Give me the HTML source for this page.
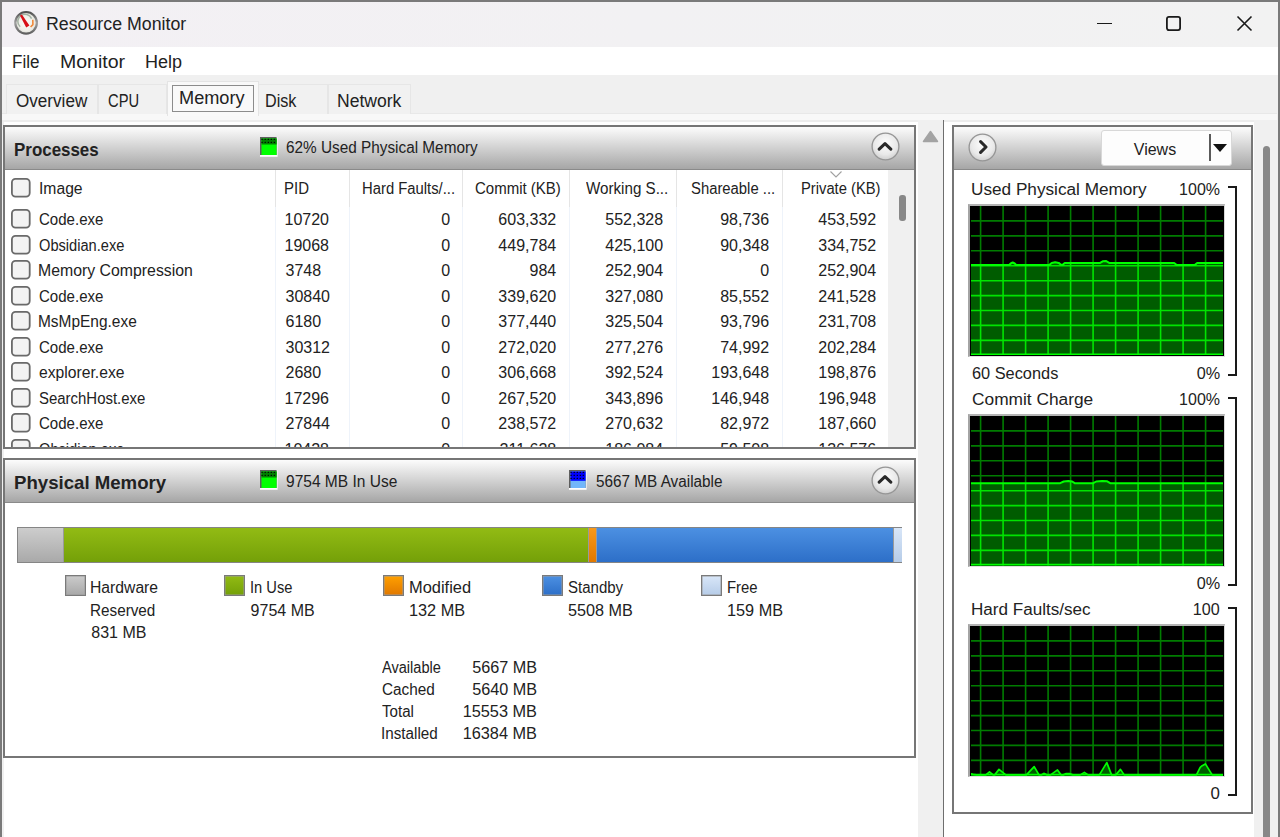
<!DOCTYPE html>
<html><head><meta charset="utf-8"><title>Resource Monitor</title>
<style>
html,body{margin:0;padding:0;width:1280px;height:837px;overflow:hidden;background:#fff;}
body{position:relative;font-family:"Liberation Sans", sans-serif;}
div,span,svg{position:absolute;box-sizing:border-box;}
.t{white-space:nowrap;}
</style></head><body>
<div style="left:0px;top:0px;width:1280px;height:47px;background:linear-gradient(90deg,#f3f0f4,#f2f1f3 50%,#f2f2f2)"></div>
<div style="left:0px;top:47px;width:1280px;height:28px;background:#fff"></div>
<div style="left:0px;top:75px;width:1280px;height:45px;background:#f0f0f0"></div>
<div style="left:0px;top:120px;width:1280px;height:717px;background:#fff"></div>
<div style="left:2px;top:120px;width:1.5px;height:717px;background:#f0f0f0"></div>
<svg style="left:13px;top:10px" width="26" height="26" viewBox="0 0 26 26">
<defs><radialGradient id="ig" cx="50%" cy="50%" r="50%"><stop offset="0" stop-color="#fbfbf8"/><stop offset="0.7" stop-color="#f0f0ea"/><stop offset="1" stop-color="#dcdcd6"/></radialGradient>
<linearGradient id="rim" x1="0" y1="0" x2="0" y2="1"><stop offset="0" stop-color="#505050"/><stop offset="0.5" stop-color="#a0a0a0"/><stop offset="1" stop-color="#606060"/></linearGradient></defs>
<circle cx="13.1" cy="12.8" r="10.8" fill="url(#ig)" stroke="url(#rim)" stroke-width="2.2"/>
<path d="M7.2 16.8 A7.2 7.2 0 1 1 18.6 8.6" fill="none" stroke="#a4b2a4" stroke-width="1.5"/>
<path d="M7.0 5.4 L8.9 4.5 L16.4 15.4 L13.2 17.6 Z" fill="#d81018"/>
<path d="M19.8 9.8 L19.9 14.6 L17.6 17" fill="none" stroke="#f0883a" stroke-width="1.6" stroke-linejoin="round"/>
</svg>
<span class="t" style="left:46.31px;top:13.36px;font-size:18px;line-height:22px;font-weight:400;color:#222;transform:scaleX(0.9868);transform-origin:left center;">Resource Monitor</span>
<div style="left:1097px;top:22.8px;width:15px;height:1.5px;background:#1a1a1a"></div>
<svg style="left:1165px;top:15px" width="17" height="17" viewBox="0 0 17 17"><rect x="1.9" y="1.9" width="13.2" height="13.2" rx="2" fill="none" stroke="#1a1a1a" stroke-width="1.8"/></svg>
<svg style="left:1236px;top:15px" width="17" height="17" viewBox="0 0 17 17"><path d="M1.5 1.5L15.5 15.5M15.5 1.5L1.5 15.5" stroke="#1a1a1a" stroke-width="1.6"/></svg>
<span class="t" style="left:12.35px;top:51.36px;font-size:18px;line-height:22px;font-weight:400;color:#222;transform:scaleX(0.9467);transform-origin:left center;">File</span>
<span class="t" style="left:59.92px;top:51.36px;font-size:18px;line-height:22px;font-weight:400;color:#222;transform:scaleX(1.0843);transform-origin:left center;">Monitor</span>
<span class="t" style="left:145.00px;top:51.36px;font-size:18px;line-height:22px;font-weight:400;color:#222;">Help</span>
<div style="left:2px;top:113.3px;width:1275px;height:0.8px;background:#e8e8e8"></div>
<div style="left:2px;top:114px;width:1275px;height:5.5px;background:#f8f8f8"></div>
<div style="left:2px;top:119.5px;width:1275px;height:2px;background:#ededed"></div>
<div style="left:6px;top:84px;width:92px;height:30px;background:#f1f1f1;border:1px solid #e6e6e6;border-bottom:none"></div>
<div style="left:98px;top:84px;width:69px;height:30px;background:#f1f1f1;border:1px solid #e6e6e6;border-bottom:none"></div>
<div style="left:258px;top:84px;width:70px;height:30px;background:#f1f1f1;border:1px solid #e6e6e6;border-bottom:none"></div>
<div style="left:328px;top:84px;width:83px;height:30px;background:#f1f1f1;border:1px solid #e6e6e6;border-bottom:none"></div>
<div style="left:167px;top:81px;width:92px;height:35px;background:#f9f9f9;border:1px solid #e4e4e4;border-bottom:none"></div>
<div style="left:172px;top:84.5px;width:82px;height:27px;border:1.4px solid #8c8c8c"></div>
<span class="t" style="left:15.60px;top:90.36px;font-size:18px;line-height:22px;font-weight:400;color:#222;transform:scaleX(0.9498);transform-origin:left center;">Overview</span>
<span class="t" style="left:107.50px;top:90.36px;font-size:18px;line-height:22px;font-weight:400;color:#222;transform:scaleX(0.8188);transform-origin:left center;">CPU</span>
<span class="t" style="left:178.69px;top:87.36px;font-size:18px;line-height:22px;font-weight:400;color:#222;transform:scaleX(1.0093);transform-origin:left center;">Memory</span>
<span class="t" style="left:264.70px;top:90.36px;font-size:18px;line-height:22px;font-weight:400;color:#222;transform:scaleX(0.8972);transform-origin:left center;">Disk</span>
<span class="t" style="left:336.72px;top:90.36px;font-size:18px;line-height:22px;font-weight:400;color:#222;transform:scaleX(0.9755);transform-origin:left center;">Network</span>
<div style="left:918px;top:120px;width:25px;height:717px;background:#f0f0f0"></div>
<div style="left:943px;top:120px;width:1.3px;height:717px;background:#6e6e6e"></div>
<svg style="left:922px;top:130px" width="17" height="13" viewBox="0 0 17 13"><path d="M8.5 1.5L15.5 11.5L1.5 11.5Z" fill="#a3a3a3" stroke="#a3a3a3" stroke-width="1.5" stroke-linejoin="round"/></svg>
<div style="left:1254px;top:120px;width:24px;height:717px;background:#f0f0f0"></div>
<div style="left:1263px;top:146px;width:7px;height:691px;background:#888;border-radius:3.5px 3.5px 0 0"></div>
<div style="left:3px;top:125px;width:913px;height:324px;border:2px solid #767676;background:#fff"></div>
<div style="left:5px;top:127px;width:909px;height:43px;background:linear-gradient(#fcfcfc,#a6a6a6);border-bottom:1px solid #8a8a8a"></div>
<span class="t" style="left:13.91px;top:137.82px;font-size:19px;line-height:24px;font-weight:700;color:#222;transform:scaleX(0.8908);transform-origin:left center;">Processes</span>
<svg style="left:260.2px;top:137px" width="18" height="20" viewBox="0 0 18 20"><rect x="0" y="0" width="17.6" height="19.8" fill="#fdfdfd"/><rect x="0" y="0" width="16.6" height="18" fill="#5e5e5e"/><rect x="1.5" y="1.5" width="15.1" height="16.5" fill="#00ff00"/><rect x="1.5" y="1.5" width="15.1" height="6" fill="#008000"/><rect x="1.45" y="1.65" width="1.3" height="1.3" rx="0.4" fill="#000"/><rect x="4.55" y="1.65" width="1.3" height="1.3" rx="0.4" fill="#000"/><rect x="7.65" y="1.65" width="1.3" height="1.3" rx="0.4" fill="#000"/><rect x="10.65" y="1.65" width="1.3" height="1.3" rx="0.4" fill="#000"/><rect x="13.65" y="1.65" width="1.3" height="1.3" rx="0.4" fill="#000"/><rect x="1.45" y="4.70" width="1.3" height="1.3" rx="0.4" fill="#000"/><rect x="4.55" y="4.70" width="1.3" height="1.3" rx="0.4" fill="#000"/><rect x="7.65" y="4.70" width="1.3" height="1.3" rx="0.4" fill="#000"/><rect x="10.65" y="4.70" width="1.3" height="1.3" rx="0.4" fill="#000"/><rect x="13.65" y="4.70" width="1.3" height="1.3" rx="0.4" fill="#000"/></svg>
<span class="t" style="left:285.75px;top:138.06px;font-size:16px;line-height:20px;font-weight:400;color:#222;transform:scaleX(0.9582);transform-origin:left center;">62% Used Physical Memory</span>
<svg style="left:870.5px;top:132.0px" width="29" height="29" viewBox="0 0 29 29"><defs><radialGradient id="cb885146" cx="50%" cy="38%" r="60%"><stop offset="0" stop-color="#fdfdfd"/><stop offset="0.7" stop-color="#e9e9e9"/><stop offset="1" stop-color="#d2d2d2"/></radialGradient></defs><circle cx="14.5" cy="14.5" r="13.4" fill="url(#cb885146)" stroke="#959595" stroke-width="1.3"/></svg>
<svg style="left:877px;top:140.5px" width="16" height="10" viewBox="0 0 16 10"><path d="M2.2 8.2L8 2.6L13.8 8.2" fill="none" stroke="#2a2a2a" stroke-width="3" stroke-linecap="round" stroke-linejoin="round"/></svg>
<div style="left:274.5px;top:170px;width:1px;height:37px;background:#e5e5e5"></div>
<div style="left:274.5px;top:207px;width:1px;height:240px;background:#eef3fa"></div>
<div style="left:349px;top:170px;width:1px;height:37px;background:#e5e5e5"></div>
<div style="left:349px;top:207px;width:1px;height:240px;background:#eef3fa"></div>
<div style="left:462px;top:170px;width:1px;height:37px;background:#e5e5e5"></div>
<div style="left:462px;top:207px;width:1px;height:240px;background:#eef3fa"></div>
<div style="left:568.5px;top:170px;width:1px;height:37px;background:#e5e5e5"></div>
<div style="left:568.5px;top:207px;width:1px;height:240px;background:#eef3fa"></div>
<div style="left:675.5px;top:170px;width:1px;height:37px;background:#e5e5e5"></div>
<div style="left:675.5px;top:207px;width:1px;height:240px;background:#eef3fa"></div>
<div style="left:781.5px;top:170px;width:1px;height:37px;background:#e5e5e5"></div>
<div style="left:781.5px;top:207px;width:1px;height:240px;background:#eef3fa"></div>
<div style="left:888px;top:170px;width:26px;height:277px;background:#f0f0f0"></div>
<div style="left:899px;top:195px;width:6.5px;height:26px;background:#888;border-radius:3px"></div>
<svg style="left:828.5px;top:169.5px" width="14" height="9" viewBox="0 0 14 9"><path d="M1.5 1.5L7 7L12.5 1.5" fill="none" stroke="#a0a0a0" stroke-width="1.1"/></svg>
<svg style="left:11.3px;top:177.7px" width="20" height="20" viewBox="0 0 20 20"><rect x="0.9" y="0.9" width="17.8" height="17.8" rx="3.6" fill="#f3f3f3" stroke="#6a6a6a" stroke-width="1.8"/></svg>
<span class="t" style="left:39.02px;top:179.06px;font-size:16px;line-height:20px;font-weight:400;color:#222;transform:scaleX(0.9800);transform-origin:left center;">Image</span>
<span class="t" style="left:283.56px;top:179.06px;font-size:16px;line-height:20px;font-weight:400;color:#222;transform:scaleX(0.9356);transform-origin:left center;">PID</span>
<span class="t" style="left:361.87px;top:179.06px;font-size:16px;line-height:20px;font-weight:400;color:#222;transform:scaleX(0.9262);transform-origin:left center;">Hard Faults/...</span>
<span class="t" style="left:475.00px;top:179.06px;font-size:16px;line-height:20px;font-weight:400;color:#222;transform:scaleX(0.9372);transform-origin:left center;">Commit (KB)</span>
<span class="t" style="left:586.00px;top:179.06px;font-size:16px;line-height:20px;font-weight:400;color:#222;transform:scaleX(0.9473);transform-origin:left center;">Working S...</span>
<span class="t" style="left:690.60px;top:179.06px;font-size:16px;line-height:20px;font-weight:400;color:#222;transform:scaleX(0.9274);transform-origin:left center;">Shareable ...</span>
<span class="t" style="left:801.08px;top:179.06px;font-size:16px;line-height:20px;font-weight:400;color:#222;transform:scaleX(0.9221);transform-origin:left center;">Private (KB)</span>
<div style="left:5px;top:207px;width:883px;height:240px;overflow:hidden">
<svg style="left:6.300000000000001px;top:2.3000000000000114px" width="20" height="20" viewBox="0 0 20 20"><rect x="0.9" y="0.9" width="17.8" height="17.8" rx="3.6" fill="#f3f3f3" stroke="#6a6a6a" stroke-width="1.8"/></svg>
<span class="t" style="left:33.60px;top:3.36px;font-size:16px;line-height:20px;font-weight:400;color:#222;transform:scaleX(0.9403);transform-origin:left center;">Code.exe</span>
<span class="t" style="left:279.50px;top:3.36px;font-size:16px;line-height:20px;font-weight:400;color:#222;">10720</span>
<span class="t" style="left:436.20px;top:3.36px;font-size:16px;line-height:20px;font-weight:400;color:#222;">0</span>
<span class="t" style="left:493.36px;top:3.36px;font-size:16px;line-height:20px;font-weight:400;color:#222;">603,332</span>
<span class="t" style="left:600.26px;top:3.36px;font-size:16px;line-height:20px;font-weight:400;color:#222;">552,328</span>
<span class="t" style="left:715.16px;top:3.36px;font-size:16px;line-height:20px;font-weight:400;color:#222;">98,736</span>
<span class="t" style="left:813.26px;top:3.36px;font-size:16px;line-height:20px;font-weight:400;color:#222;">453,592</span>
<svg style="left:6.300000000000001px;top:27.80000000000001px" width="20" height="20" viewBox="0 0 20 20"><rect x="0.9" y="0.9" width="17.8" height="17.8" rx="3.6" fill="#f3f3f3" stroke="#6a6a6a" stroke-width="1.8"/></svg>
<span class="t" style="left:33.60px;top:28.86px;font-size:16px;line-height:20px;font-weight:400;color:#222;transform:scaleX(0.9145);transform-origin:left center;">Obsidian.exe</span>
<span class="t" style="left:279.50px;top:28.86px;font-size:16px;line-height:20px;font-weight:400;color:#222;">19068</span>
<span class="t" style="left:436.20px;top:28.86px;font-size:16px;line-height:20px;font-weight:400;color:#222;">0</span>
<span class="t" style="left:493.36px;top:28.86px;font-size:16px;line-height:20px;font-weight:400;color:#222;">449,784</span>
<span class="t" style="left:600.26px;top:28.86px;font-size:16px;line-height:20px;font-weight:400;color:#222;">425,100</span>
<span class="t" style="left:715.16px;top:28.86px;font-size:16px;line-height:20px;font-weight:400;color:#222;">90,348</span>
<span class="t" style="left:813.26px;top:28.86px;font-size:16px;line-height:20px;font-weight:400;color:#222;">334,752</span>
<svg style="left:6.300000000000001px;top:53.30000000000001px" width="20" height="20" viewBox="0 0 20 20"><rect x="0.9" y="0.9" width="17.8" height="17.8" rx="3.6" fill="#f3f3f3" stroke="#6a6a6a" stroke-width="1.8"/></svg>
<span class="t" style="left:32.61px;top:54.36px;font-size:16px;line-height:20px;font-weight:400;color:#222;transform:scaleX(0.9897);transform-origin:left center;">Memory Compression</span>
<span class="t" style="left:280.50px;top:54.36px;font-size:16px;line-height:20px;font-weight:400;color:#222;">3748</span>
<span class="t" style="left:436.20px;top:54.36px;font-size:16px;line-height:20px;font-weight:400;color:#222;">0</span>
<span class="t" style="left:524.50px;top:54.36px;font-size:16px;line-height:20px;font-weight:400;color:#222;">984</span>
<span class="t" style="left:600.26px;top:54.36px;font-size:16px;line-height:20px;font-weight:400;color:#222;">252,904</span>
<span class="t" style="left:755.20px;top:54.36px;font-size:16px;line-height:20px;font-weight:400;color:#222;">0</span>
<span class="t" style="left:813.26px;top:54.36px;font-size:16px;line-height:20px;font-weight:400;color:#222;">252,904</span>
<svg style="left:6.300000000000001px;top:78.80000000000001px" width="20" height="20" viewBox="0 0 20 20"><rect x="0.9" y="0.9" width="17.8" height="17.8" rx="3.6" fill="#f3f3f3" stroke="#6a6a6a" stroke-width="1.8"/></svg>
<span class="t" style="left:33.60px;top:79.86px;font-size:16px;line-height:20px;font-weight:400;color:#222;transform:scaleX(0.9403);transform-origin:left center;">Code.exe</span>
<span class="t" style="left:280.50px;top:79.86px;font-size:16px;line-height:20px;font-weight:400;color:#222;">30840</span>
<span class="t" style="left:436.20px;top:79.86px;font-size:16px;line-height:20px;font-weight:400;color:#222;">0</span>
<span class="t" style="left:493.36px;top:79.86px;font-size:16px;line-height:20px;font-weight:400;color:#222;">339,620</span>
<span class="t" style="left:600.26px;top:79.86px;font-size:16px;line-height:20px;font-weight:400;color:#222;">327,080</span>
<span class="t" style="left:715.16px;top:79.86px;font-size:16px;line-height:20px;font-weight:400;color:#222;">85,552</span>
<span class="t" style="left:813.26px;top:79.86px;font-size:16px;line-height:20px;font-weight:400;color:#222;">241,528</span>
<svg style="left:6.300000000000001px;top:104.30000000000001px" width="20" height="20" viewBox="0 0 20 20"><rect x="0.9" y="0.9" width="17.8" height="17.8" rx="3.6" fill="#f3f3f3" stroke="#6a6a6a" stroke-width="1.8"/></svg>
<span class="t" style="left:32.63px;top:105.36px;font-size:16px;line-height:20px;font-weight:400;color:#222;transform:scaleX(0.9658);transform-origin:left center;">MsMpEng.exe</span>
<span class="t" style="left:280.50px;top:105.36px;font-size:16px;line-height:20px;font-weight:400;color:#222;">6180</span>
<span class="t" style="left:436.20px;top:105.36px;font-size:16px;line-height:20px;font-weight:400;color:#222;">0</span>
<span class="t" style="left:493.36px;top:105.36px;font-size:16px;line-height:20px;font-weight:400;color:#222;">377,440</span>
<span class="t" style="left:600.26px;top:105.36px;font-size:16px;line-height:20px;font-weight:400;color:#222;">325,504</span>
<span class="t" style="left:715.16px;top:105.36px;font-size:16px;line-height:20px;font-weight:400;color:#222;">93,796</span>
<span class="t" style="left:813.26px;top:105.36px;font-size:16px;line-height:20px;font-weight:400;color:#222;">231,708</span>
<svg style="left:6.300000000000001px;top:129.8px" width="20" height="20" viewBox="0 0 20 20"><rect x="0.9" y="0.9" width="17.8" height="17.8" rx="3.6" fill="#f3f3f3" stroke="#6a6a6a" stroke-width="1.8"/></svg>
<span class="t" style="left:33.60px;top:130.86px;font-size:16px;line-height:20px;font-weight:400;color:#222;transform:scaleX(0.9403);transform-origin:left center;">Code.exe</span>
<span class="t" style="left:280.50px;top:130.86px;font-size:16px;line-height:20px;font-weight:400;color:#222;">30312</span>
<span class="t" style="left:436.20px;top:130.86px;font-size:16px;line-height:20px;font-weight:400;color:#222;">0</span>
<span class="t" style="left:493.36px;top:130.86px;font-size:16px;line-height:20px;font-weight:400;color:#222;">272,020</span>
<span class="t" style="left:600.26px;top:130.86px;font-size:16px;line-height:20px;font-weight:400;color:#222;">277,276</span>
<span class="t" style="left:715.16px;top:130.86px;font-size:16px;line-height:20px;font-weight:400;color:#222;">74,992</span>
<span class="t" style="left:813.26px;top:130.86px;font-size:16px;line-height:20px;font-weight:400;color:#222;">202,284</span>
<svg style="left:6.300000000000001px;top:155.3px" width="20" height="20" viewBox="0 0 20 20"><rect x="0.9" y="0.9" width="17.8" height="17.8" rx="3.6" fill="#f3f3f3" stroke="#6a6a6a" stroke-width="1.8"/></svg>
<span class="t" style="left:33.60px;top:156.36px;font-size:16px;line-height:20px;font-weight:400;color:#222;transform:scaleX(0.9809);transform-origin:left center;">explorer.exe</span>
<span class="t" style="left:280.50px;top:156.36px;font-size:16px;line-height:20px;font-weight:400;color:#222;">2680</span>
<span class="t" style="left:436.20px;top:156.36px;font-size:16px;line-height:20px;font-weight:400;color:#222;">0</span>
<span class="t" style="left:493.36px;top:156.36px;font-size:16px;line-height:20px;font-weight:400;color:#222;">306,668</span>
<span class="t" style="left:600.26px;top:156.36px;font-size:16px;line-height:20px;font-weight:400;color:#222;">392,524</span>
<span class="t" style="left:706.26px;top:156.36px;font-size:16px;line-height:20px;font-weight:400;color:#222;">193,648</span>
<span class="t" style="left:813.26px;top:156.36px;font-size:16px;line-height:20px;font-weight:400;color:#222;">198,876</span>
<svg style="left:6.300000000000001px;top:180.8px" width="20" height="20" viewBox="0 0 20 20"><rect x="0.9" y="0.9" width="17.8" height="17.8" rx="3.6" fill="#f3f3f3" stroke="#6a6a6a" stroke-width="1.8"/></svg>
<span class="t" style="left:33.60px;top:181.86px;font-size:16px;line-height:20px;font-weight:400;color:#222;transform:scaleX(0.9338);transform-origin:left center;">SearchHost.exe</span>
<span class="t" style="left:279.50px;top:181.86px;font-size:16px;line-height:20px;font-weight:400;color:#222;">17296</span>
<span class="t" style="left:436.20px;top:181.86px;font-size:16px;line-height:20px;font-weight:400;color:#222;">0</span>
<span class="t" style="left:493.36px;top:181.86px;font-size:16px;line-height:20px;font-weight:400;color:#222;">267,520</span>
<span class="t" style="left:600.26px;top:181.86px;font-size:16px;line-height:20px;font-weight:400;color:#222;">343,896</span>
<span class="t" style="left:706.26px;top:181.86px;font-size:16px;line-height:20px;font-weight:400;color:#222;">146,948</span>
<span class="t" style="left:813.26px;top:181.86px;font-size:16px;line-height:20px;font-weight:400;color:#222;">196,948</span>
<svg style="left:6.300000000000001px;top:206.3px" width="20" height="20" viewBox="0 0 20 20"><rect x="0.9" y="0.9" width="17.8" height="17.8" rx="3.6" fill="#f3f3f3" stroke="#6a6a6a" stroke-width="1.8"/></svg>
<span class="t" style="left:33.60px;top:207.36px;font-size:16px;line-height:20px;font-weight:400;color:#222;transform:scaleX(0.9403);transform-origin:left center;">Code.exe</span>
<span class="t" style="left:280.50px;top:207.36px;font-size:16px;line-height:20px;font-weight:400;color:#222;">27844</span>
<span class="t" style="left:436.20px;top:207.36px;font-size:16px;line-height:20px;font-weight:400;color:#222;">0</span>
<span class="t" style="left:493.36px;top:207.36px;font-size:16px;line-height:20px;font-weight:400;color:#222;">238,572</span>
<span class="t" style="left:600.26px;top:207.36px;font-size:16px;line-height:20px;font-weight:400;color:#222;">270,632</span>
<span class="t" style="left:715.16px;top:207.36px;font-size:16px;line-height:20px;font-weight:400;color:#222;">82,972</span>
<span class="t" style="left:813.26px;top:207.36px;font-size:16px;line-height:20px;font-weight:400;color:#222;">187,660</span>
<svg style="left:6.300000000000001px;top:231.8px" width="20" height="20" viewBox="0 0 20 20"><rect x="0.9" y="0.9" width="17.8" height="17.8" rx="3.6" fill="#f3f3f3" stroke="#6a6a6a" stroke-width="1.8"/></svg>
<span class="t" style="left:33.60px;top:232.86px;font-size:16px;line-height:20px;font-weight:400;color:#222;transform:scaleX(0.9145);transform-origin:left center;">Obsidian.exe</span>
<span class="t" style="left:279.50px;top:232.86px;font-size:16px;line-height:20px;font-weight:400;color:#222;">10428</span>
<span class="t" style="left:436.20px;top:232.86px;font-size:16px;line-height:20px;font-weight:400;color:#222;">0</span>
<span class="t" style="left:494.55px;top:232.86px;font-size:16px;line-height:20px;font-weight:400;color:#222;">211,628</span>
<span class="t" style="left:600.26px;top:232.86px;font-size:16px;line-height:20px;font-weight:400;color:#222;">186,084</span>
<span class="t" style="left:715.16px;top:232.86px;font-size:16px;line-height:20px;font-weight:400;color:#222;">59,508</span>
<span class="t" style="left:813.26px;top:232.86px;font-size:16px;line-height:20px;font-weight:400;color:#222;">136,576</span>
</div>
<div style="left:3px;top:458px;width:913px;height:300px;border:2px solid #767676;background:#fff"></div>
<div style="left:5px;top:460px;width:909px;height:43px;background:linear-gradient(#fcfcfc,#a6a6a6);border-bottom:1px solid #8a8a8a"></div>
<span class="t" style="left:13.82px;top:471.02px;font-size:19px;line-height:24px;font-weight:700;color:#222;transform:scaleX(0.9801);transform-origin:left center;">Physical Memory</span>
<svg style="left:260.2px;top:470px" width="18" height="20" viewBox="0 0 18 20"><rect x="0" y="0" width="17.6" height="19.8" fill="#fdfdfd"/><rect x="0" y="0" width="16.6" height="18" fill="#5e5e5e"/><rect x="1.5" y="1.5" width="15.1" height="16.5" fill="#00ff00"/><rect x="1.5" y="1.5" width="15.1" height="6" fill="#008000"/><rect x="1.45" y="1.65" width="1.3" height="1.3" rx="0.4" fill="#000"/><rect x="4.55" y="1.65" width="1.3" height="1.3" rx="0.4" fill="#000"/><rect x="7.65" y="1.65" width="1.3" height="1.3" rx="0.4" fill="#000"/><rect x="10.65" y="1.65" width="1.3" height="1.3" rx="0.4" fill="#000"/><rect x="13.65" y="1.65" width="1.3" height="1.3" rx="0.4" fill="#000"/><rect x="1.45" y="4.70" width="1.3" height="1.3" rx="0.4" fill="#000"/><rect x="4.55" y="4.70" width="1.3" height="1.3" rx="0.4" fill="#000"/><rect x="7.65" y="4.70" width="1.3" height="1.3" rx="0.4" fill="#000"/><rect x="10.65" y="4.70" width="1.3" height="1.3" rx="0.4" fill="#000"/><rect x="13.65" y="4.70" width="1.3" height="1.3" rx="0.4" fill="#000"/></svg>
<span class="t" style="left:285.70px;top:472.06px;font-size:16px;line-height:20px;font-weight:400;color:#222;transform:scaleX(0.9701);transform-origin:left center;">9754 MB In Use</span>
<svg style="left:569.2px;top:470px" width="18" height="20" viewBox="0 0 18 20"><rect x="0" y="0" width="17.6" height="19.8" fill="#fdfdfd"/><rect x="0" y="0" width="16.6" height="18" fill="#5e5e5e"/><rect x="1.5" y="1.5" width="15.1" height="16.5" fill="#72b6fa"/><rect x="1.5" y="1.5" width="15.1" height="9.3" fill="#0000ff"/><rect x="1.45" y="1.65" width="1.3" height="1.3" rx="0.4" fill="#000"/><rect x="4.55" y="1.65" width="1.3" height="1.3" rx="0.4" fill="#000"/><rect x="7.65" y="1.65" width="1.3" height="1.3" rx="0.4" fill="#000"/><rect x="10.65" y="1.65" width="1.3" height="1.3" rx="0.4" fill="#000"/><rect x="13.65" y="1.65" width="1.3" height="1.3" rx="0.4" fill="#000"/><rect x="1.45" y="4.70" width="1.3" height="1.3" rx="0.4" fill="#000"/><rect x="4.55" y="4.70" width="1.3" height="1.3" rx="0.4" fill="#000"/><rect x="7.65" y="4.70" width="1.3" height="1.3" rx="0.4" fill="#000"/><rect x="10.65" y="4.70" width="1.3" height="1.3" rx="0.4" fill="#000"/><rect x="13.65" y="4.70" width="1.3" height="1.3" rx="0.4" fill="#000"/><rect x="1.45" y="7.75" width="1.3" height="1.3" rx="0.4" fill="#000"/><rect x="4.55" y="7.75" width="1.3" height="1.3" rx="0.4" fill="#000"/><rect x="7.65" y="7.75" width="1.3" height="1.3" rx="0.4" fill="#000"/><rect x="10.65" y="7.75" width="1.3" height="1.3" rx="0.4" fill="#000"/><rect x="13.65" y="7.75" width="1.3" height="1.3" rx="0.4" fill="#000"/></svg>
<span class="t" style="left:595.60px;top:472.06px;font-size:16px;line-height:20px;font-weight:400;color:#222;transform:scaleX(0.9563);transform-origin:left center;">5667 MB Available</span>
<svg style="left:870.5px;top:465.5px" width="29" height="29" viewBox="0 0 29 29"><defs><radialGradient id="cb885480" cx="50%" cy="38%" r="60%"><stop offset="0" stop-color="#fdfdfd"/><stop offset="0.7" stop-color="#e9e9e9"/><stop offset="1" stop-color="#d2d2d2"/></radialGradient></defs><circle cx="14.5" cy="14.5" r="13.4" fill="url(#cb885480)" stroke="#959595" stroke-width="1.3"/></svg>
<svg style="left:877px;top:474px" width="16" height="10" viewBox="0 0 16 10"><path d="M2.2 8.2L8 2.6L13.8 8.2" fill="none" stroke="#2a2a2a" stroke-width="3" stroke-linecap="round" stroke-linejoin="round"/></svg>
<div style="left:17px;top:527px;width:885px;height:36px;border:1px solid #858585;box-shadow:inset 0 0 0 1px rgba(140,140,140,0.45);background:#c8c8c8"></div>
<div style="left:18px;top:528px;width:45px;height:34px;background:linear-gradient(#cdcdcd,#a9a9a9)"></div>
<div style="left:63px;top:528px;width:525px;height:34px;background:linear-gradient(#92bb14,#74a008);border-left:1px solid #9a9a9a"></div>
<div style="left:588px;top:528px;width:7.5px;height:34px;background:linear-gradient(#f8991a,#e07800);border-left:1px solid #9a9a9a"></div>
<div style="left:595.5px;top:528px;width:297px;height:34px;background:linear-gradient(#4c90e2,#2d6fc8);border-left:1px solid #9a9a9a"></div>
<div style="left:892.5px;top:528px;width:9.5px;height:34px;background:linear-gradient(#d8e6f8,#b6cce8);border-left:1px solid #9a9a9a"></div>
<div style="left:65.3px;top:575.4px;width:20.6px;height:20.6px;border:1px solid #7a7a7a;box-shadow:inset 0 0 0 0.5px #9a9a9a;background:linear-gradient(#cbcbcb,#a8a8a8)"></div>
<div style="left:224.2px;top:575.4px;width:20.6px;height:20.6px;border:1px solid #7a7a7a;box-shadow:inset 0 0 0 0.5px #9a9a9a;background:linear-gradient(#92bb14,#74a008)"></div>
<div style="left:383.1px;top:575.4px;width:20.6px;height:20.6px;border:1px solid #7a7a7a;box-shadow:inset 0 0 0 0.5px #9a9a9a;background:linear-gradient(#ffa000,#e07800)"></div>
<div style="left:542.2px;top:575.4px;width:20.6px;height:20.6px;border:1px solid #7a7a7a;box-shadow:inset 0 0 0 0.5px #9a9a9a;background:linear-gradient(#4c90e2,#2d6fc8)"></div>
<div style="left:701.3px;top:575.4px;width:20.6px;height:20.6px;border:1px solid #7a7a7a;box-shadow:inset 0 0 0 0.5px #9a9a9a;background:linear-gradient(#d8e6f8,#b6cce8)"></div>
<span class="t" style="left:90.27px;top:578.46px;font-size:16px;line-height:20px;font-weight:400;color:#222;transform:scaleX(0.9816);transform-origin:left center;">Hardware</span>
<span class="t" style="left:90.30px;top:601.26px;font-size:16px;line-height:20px;font-weight:400;color:#222;transform:scaleX(0.9538);transform-origin:left center;">Reserved</span>
<span class="t" style="left:91.25px;top:623.46px;font-size:16px;line-height:20px;font-weight:400;color:#222;">831 MB</span>
<span class="t" style="left:249.68px;top:578.46px;font-size:16px;line-height:20px;font-weight:400;color:#222;transform:scaleX(0.9174);transform-origin:left center;">In Use</span>
<span class="t" style="left:250.60px;top:601.26px;font-size:16px;line-height:20px;font-weight:400;color:#222;">9754 MB</span>
<span class="t" style="left:408.57px;top:578.46px;font-size:16px;line-height:20px;font-weight:400;color:#222;transform:scaleX(1.0260);transform-origin:left center;">Modified</span>
<span class="t" style="left:408.58px;top:601.26px;font-size:16px;line-height:20px;font-weight:400;color:#222;transform:scaleX(1.0174);transform-origin:left center;">132 MB</span>
<span class="t" style="left:568.20px;top:578.46px;font-size:16px;line-height:20px;font-weight:400;color:#222;transform:scaleX(0.9385);transform-origin:left center;">Standby</span>
<span class="t" style="left:568.20px;top:601.26px;font-size:16px;line-height:20px;font-weight:400;color:#222;transform:scaleX(1.0131);transform-origin:left center;">5508 MB</span>
<span class="t" style="left:726.67px;top:578.46px;font-size:16px;line-height:20px;font-weight:400;color:#222;transform:scaleX(0.9281);transform-origin:left center;">Free</span>
<span class="t" style="left:726.58px;top:601.26px;font-size:16px;line-height:20px;font-weight:400;color:#222;transform:scaleX(1.0174);transform-origin:left center;">159 MB</span>
<span class="t" style="left:382.00px;top:657.86px;font-size:16px;line-height:20px;font-weight:400;color:#222;transform:scaleX(0.9113);transform-origin:left center;">Available</span>
<span class="t" style="left:472.94px;top:657.86px;font-size:16px;line-height:20px;font-weight:400;color:#222;transform:scaleX(1.0131);transform-origin:right center;">5667 MB</span>
<span class="t" style="left:382.00px;top:680.06px;font-size:16px;line-height:20px;font-weight:400;color:#222;transform:scaleX(0.9585);transform-origin:left center;">Cached</span>
<span class="t" style="left:472.94px;top:680.06px;font-size:16px;line-height:20px;font-weight:400;color:#222;transform:scaleX(1.0131);transform-origin:right center;">5640 MB</span>
<span class="t" style="left:382.00px;top:702.26px;font-size:16px;line-height:20px;font-weight:400;color:#222;transform:scaleX(0.9446);transform-origin:left center;">Total</span>
<span class="t" style="left:464.05px;top:702.26px;font-size:16px;line-height:20px;font-weight:400;color:#222;transform:scaleX(1.0187);transform-origin:right center;">15553 MB</span>
<span class="t" style="left:381.05px;top:724.46px;font-size:16px;line-height:20px;font-weight:400;color:#222;transform:scaleX(0.9516);transform-origin:left center;">Installed</span>
<span class="t" style="left:464.05px;top:724.46px;font-size:16px;line-height:20px;font-weight:400;color:#222;transform:scaleX(1.0187);transform-origin:right center;">16384 MB</span>
<div style="left:952px;top:125px;width:301px;height:689px;border:2px solid #767676;background:#fff"></div>
<div style="left:954px;top:127px;width:297px;height:43px;background:linear-gradient(#fcfcfc,#a6a6a6);border-bottom:1px solid #8a8a8a"></div>
<svg style="left:968.0px;top:132.5px" width="29" height="29" viewBox="0 0 29 29"><defs><radialGradient id="cb982147" cx="50%" cy="38%" r="60%"><stop offset="0" stop-color="#fdfdfd"/><stop offset="0.7" stop-color="#e9e9e9"/><stop offset="1" stop-color="#d2d2d2"/></radialGradient></defs><circle cx="14.5" cy="14.5" r="13.4" fill="url(#cb982147)" stroke="#959595" stroke-width="1.3"/></svg>
<svg style="left:977.5px;top:139px" width="10" height="16" viewBox="0 0 10 16"><path d="M2.6 2.6L8 8L2.6 13.4" fill="none" stroke="#2a2a2a" stroke-width="3" stroke-linecap="round" stroke-linejoin="round"/></svg>
<div style="left:1101px;top:129.7px;width:131px;height:36px;background:#fdfdfd;border:1px solid #d8d8d8;border-radius:3px"></div>
<span class="t" style="left:1133.75px;top:140.06px;font-size:16px;line-height:20px;font-weight:400;color:#222;">Views</span>
<div style="left:1209px;top:134px;width:1.6px;height:27px;background:#5a5a5a"></div>
<svg style="left:1212px;top:143px" width="16" height="10" viewBox="0 0 16 10"><path d="M1 1H15L8 9Z" fill="#111"/></svg>
<span class="t" style="left:970.53px;top:180.46px;font-size:16px;line-height:20px;font-weight:400;color:#222;transform:scaleX(1.0738);transform-origin:left center;">Used Physical Memory</span>
<span class="t" style="left:1179.11px;top:180.46px;font-size:16px;line-height:20px;font-weight:400;color:#222;">100%</span>
<span class="t" style="left:1196.90px;top:363.66px;font-size:16px;line-height:20px;font-weight:400;color:#222;transform:scaleX(1.0132);transform-origin:right center;">0%</span>
<span class="t" style="left:971.60px;top:363.66px;font-size:16px;line-height:20px;font-weight:400;color:#222;transform:scaleX(1.0212);transform-origin:left center;">60 Seconds</span>
<div style="left:1228px;top:186.2px;width:9px;height:1.8px;background:#1a1a1a"></div>
<div style="left:1235.2px;top:186.2px;width:1.8px;height:189.40000000000003px;background:#1a1a1a"></div>
<div style="left:1228px;top:373.8px;width:9px;height:1.8px;background:#1a1a1a"></div>
<div style="left:968px;top:203.5px;width:257px;height:153.3px;background:#000;border-top:2.8px solid #b4b4b4;border-left:2.8px solid #a4a4a4;border-right:1.5px solid #d8d8d8;border-bottom:1.5px solid #e0e0e0"></div>
<svg style="left:970.8px;top:206.3px" width="252.7" height="149.0" viewBox="0 0 252.7 149.0"><path d="M9.6 0V149.0M32.1 0V149.0M54.6 0V149.0M77.1 0V149.0M99.6 0V149.0M122.1 0V149.0M144.6 0V149.0M167.1 0V149.0M189.6 0V149.0M212.1 0V149.0M234.6 0V149.0M0 14.9H252.7M0 29.9H252.7M0 44.8H252.7M0 59.7H252.7M0 74.7H252.7M0 89.6H252.7M0 104.5H252.7M0 119.4H252.7M0 134.4H252.7" stroke="#007c00" stroke-width="1.6" fill="none"/><defs><clipPath id="c203"><path d="M-0.80 59.00 L38.20 59.00 L39.70 57.50 L41.70 56.50 L43.70 57.50 L45.20 59.00 L78.20 59.00 L80.70 56.90 L84.20 56.20 L87.70 56.90 L89.70 58.50 L91.70 58.70 L93.70 56.90 L129.20 56.90 L131.70 55.30 L135.20 55.10 L138.20 56.90 L203.20 56.90 L205.70 59.00 L223.70 59.00 L226.20 56.90 L254.20 56.90 L252.7 149.0 L0 149.0 Z"/></clipPath></defs><path d="M-0.80 59.00 L38.20 59.00 L39.70 57.50 L41.70 56.50 L43.70 57.50 L45.20 59.00 L78.20 59.00 L80.70 56.90 L84.20 56.20 L87.70 56.90 L89.70 58.50 L91.70 58.70 L93.70 56.90 L129.20 56.90 L131.70 55.30 L135.20 55.10 L138.20 56.90 L203.20 56.90 L205.70 59.00 L223.70 59.00 L226.20 56.90 L254.20 56.90 L252.7 149.0 L0 149.0 Z" fill="#005c00"/><path d="M9.6 0V149.0M32.1 0V149.0M54.6 0V149.0M77.1 0V149.0M99.6 0V149.0M122.1 0V149.0M144.6 0V149.0M167.1 0V149.0M189.6 0V149.0M212.1 0V149.0M234.6 0V149.0M0 14.9H252.7M0 29.9H252.7M0 44.8H252.7M0 59.7H252.7M0 74.7H252.7M0 89.6H252.7M0 104.5H252.7M0 119.4H252.7M0 134.4H252.7" stroke="#00e400" stroke-width="1.6" fill="none" clip-path="url(#c203)"/><path d="M-0.80 59.00 L38.20 59.00 L39.70 57.50 L41.70 56.50 L43.70 57.50 L45.20 59.00 L78.20 59.00 L80.70 56.90 L84.20 56.20 L87.70 56.90 L89.70 58.50 L91.70 58.70 L93.70 56.90 L129.20 56.90 L131.70 55.30 L135.20 55.10 L138.20 56.90 L203.20 56.90 L205.70 59.00 L223.70 59.00 L226.20 56.90 L254.20 56.90" stroke="#00ff00" stroke-width="2.0" fill="none" stroke-linejoin="round"/><path d="M0 148.2H252.7" stroke="#00ff00" stroke-width="1.6"/></svg>
<span class="t" style="left:971.60px;top:390.36px;font-size:16px;line-height:20px;font-weight:400;color:#222;transform:scaleX(1.0818);transform-origin:left center;">Commit Charge</span>
<span class="t" style="left:1179.11px;top:390.36px;font-size:16px;line-height:20px;font-weight:400;color:#222;">100%</span>
<span class="t" style="left:1196.90px;top:574.06px;font-size:16px;line-height:20px;font-weight:400;color:#222;transform:scaleX(1.0132);transform-origin:right center;">0%</span>
<div style="left:1228px;top:396.8px;width:9px;height:1.8px;background:#1a1a1a"></div>
<div style="left:1235.2px;top:396.8px;width:1.8px;height:189.20000000000005px;background:#1a1a1a"></div>
<div style="left:1228px;top:584.2px;width:9px;height:1.8px;background:#1a1a1a"></div>
<div style="left:968px;top:413.5px;width:257px;height:153.70000000000005px;background:#000;border-top:2.8px solid #b4b4b4;border-left:2.8px solid #a4a4a4;border-right:1.5px solid #d8d8d8;border-bottom:1.5px solid #e0e0e0"></div>
<svg style="left:970.8px;top:416.3px" width="252.7" height="149.4" viewBox="0 0 252.7 149.4"><path d="M9.6 0V149.4M32.1 0V149.4M54.6 0V149.4M77.1 0V149.4M99.6 0V149.4M122.1 0V149.4M144.6 0V149.4M167.1 0V149.4M189.6 0V149.4M212.1 0V149.4M234.6 0V149.4M0 14.9H252.7M0 29.9H252.7M0 44.8H252.7M0 59.7H252.7M0 74.7H252.7M0 89.6H252.7M0 104.5H252.7M0 119.4H252.7M0 134.4H252.7" stroke="#007c00" stroke-width="1.6" fill="none"/><defs><clipPath id="c413"><path d="M-0.80 67.20 L89.20 67.20 L92.70 65.50 L97.20 65.10 L101.20 65.50 L103.70 67.20 L122.20 67.20 L125.20 65.50 L131.20 65.00 L136.20 65.30 L139.20 67.20 L254.20 67.20 L252.7 149.4 L0 149.4 Z"/></clipPath></defs><path d="M-0.80 67.20 L89.20 67.20 L92.70 65.50 L97.20 65.10 L101.20 65.50 L103.70 67.20 L122.20 67.20 L125.20 65.50 L131.20 65.00 L136.20 65.30 L139.20 67.20 L254.20 67.20 L252.7 149.4 L0 149.4 Z" fill="#005c00"/><path d="M9.6 0V149.4M32.1 0V149.4M54.6 0V149.4M77.1 0V149.4M99.6 0V149.4M122.1 0V149.4M144.6 0V149.4M167.1 0V149.4M189.6 0V149.4M212.1 0V149.4M234.6 0V149.4M0 14.9H252.7M0 29.9H252.7M0 44.8H252.7M0 59.7H252.7M0 74.7H252.7M0 89.6H252.7M0 104.5H252.7M0 119.4H252.7M0 134.4H252.7" stroke="#00e400" stroke-width="1.6" fill="none" clip-path="url(#c413)"/><path d="M-0.80 67.20 L89.20 67.20 L92.70 65.50 L97.20 65.10 L101.20 65.50 L103.70 67.20 L122.20 67.20 L125.20 65.50 L131.20 65.00 L136.20 65.30 L139.20 67.20 L254.20 67.20" stroke="#00ff00" stroke-width="2.0" fill="none" stroke-linejoin="round"/><path d="M0 148.6H252.7" stroke="#00ff00" stroke-width="1.6"/></svg>
<span class="t" style="left:970.53px;top:600.06px;font-size:16px;line-height:20px;font-weight:400;color:#222;transform:scaleX(1.0672);transform-origin:left center;">Hard Faults/sec</span>
<span class="t" style="left:1193.00px;top:600.06px;font-size:16px;line-height:20px;font-weight:400;color:#222;transform:scaleX(1.0079);transform-origin:right center;">100</span>
<span class="t" style="left:1210.79px;top:784.06px;font-size:16px;line-height:20px;font-weight:400;color:#222;transform:scaleX(1.0556);transform-origin:right center;">0</span>
<div style="left:1228px;top:606.8px;width:9px;height:1.8px;background:#1a1a1a"></div>
<div style="left:1235.2px;top:606.8px;width:1.8px;height:189.2000000000001px;background:#1a1a1a"></div>
<div style="left:1228px;top:794.2px;width:9px;height:1.8px;background:#1a1a1a"></div>
<div style="left:968px;top:623.5px;width:257px;height:153.70000000000005px;background:#000;border-top:2.8px solid #b4b4b4;border-left:2.8px solid #a4a4a4;border-right:1.5px solid #d8d8d8;border-bottom:1.5px solid #e0e0e0"></div>
<svg style="left:970.8px;top:626.3px" width="252.7" height="149.4" viewBox="0 0 252.7 149.4"><path d="M9.6 0V149.4M32.1 0V149.4M54.6 0V149.4M77.1 0V149.4M99.6 0V149.4M122.1 0V149.4M144.6 0V149.4M167.1 0V149.4M189.6 0V149.4M212.1 0V149.4M234.6 0V149.4M0 14.9H252.7M0 29.9H252.7M0 44.8H252.7M0 59.7H252.7M0 74.7H252.7M0 89.6H252.7M0 104.5H252.7M0 119.4H252.7M0 134.4H252.7" stroke="#007c00" stroke-width="1.6" fill="none"/><defs><clipPath id="c623"><path d="M-0.80 147.70 L2.20 148.40 L5.20 148.90 L14.80 148.90 L18.50 145.90 L22.20 148.90 L23.70 148.90 L28.00 143.40 L34.80 148.90 L55.40 148.90 L63.20 140.60 L68.00 148.90 L70.20 148.90 L72.80 147.40 L76.00 148.90 L79.60 148.90 L86.50 143.90 L90.20 148.90 L92.20 148.90 L95.20 147.60 L98.20 147.60 L101.80 148.90 L109.20 148.90 L113.40 146.40 L117.10 148.90 L128.40 148.90 L135.80 136.60 L140.60 148.90 L144.80 148.90 L149.50 143.40 L153.20 148.90 L225.50 148.90 L229.20 141.40 L231.20 139.70 L234.40 137.90 L241.20 148.90 L254.20 148.90 L252.7 149.4 L0 149.4 Z"/></clipPath></defs><path d="M-0.80 147.70 L2.20 148.40 L5.20 148.90 L14.80 148.90 L18.50 145.90 L22.20 148.90 L23.70 148.90 L28.00 143.40 L34.80 148.90 L55.40 148.90 L63.20 140.60 L68.00 148.90 L70.20 148.90 L72.80 147.40 L76.00 148.90 L79.60 148.90 L86.50 143.90 L90.20 148.90 L92.20 148.90 L95.20 147.60 L98.20 147.60 L101.80 148.90 L109.20 148.90 L113.40 146.40 L117.10 148.90 L128.40 148.90 L135.80 136.60 L140.60 148.90 L144.80 148.90 L149.50 143.40 L153.20 148.90 L225.50 148.90 L229.20 141.40 L231.20 139.70 L234.40 137.90 L241.20 148.90 L254.20 148.90 L252.7 149.4 L0 149.4 Z" fill="#005c00"/><path d="M-0.80 147.70 L2.20 148.40 L5.20 148.90 L14.80 148.90 L18.50 145.90 L22.20 148.90 L23.70 148.90 L28.00 143.40 L34.80 148.90 L55.40 148.90 L63.20 140.60 L68.00 148.90 L70.20 148.90 L72.80 147.40 L76.00 148.90 L79.60 148.90 L86.50 143.90 L90.20 148.90 L92.20 148.90 L95.20 147.60 L98.20 147.60 L101.80 148.90 L109.20 148.90 L113.40 146.40 L117.10 148.90 L128.40 148.90 L135.80 136.60 L140.60 148.90 L144.80 148.90 L149.50 143.40 L153.20 148.90 L225.50 148.90 L229.20 141.40 L231.20 139.70 L234.40 137.90 L241.20 148.90 L254.20 148.90" stroke="#00ff00" stroke-width="1.7" fill="none" stroke-linejoin="round"/><path d="M0 148.6H252.7" stroke="#00ff00" stroke-width="1.6"/></svg>
<div style="left:0px;top:0px;width:1280px;height:837px;border-left:2px solid #7a7a7a;border-right:2px solid #7a7a7a;border-top:2px solid #7a7a7a"></div>
</body></html>
